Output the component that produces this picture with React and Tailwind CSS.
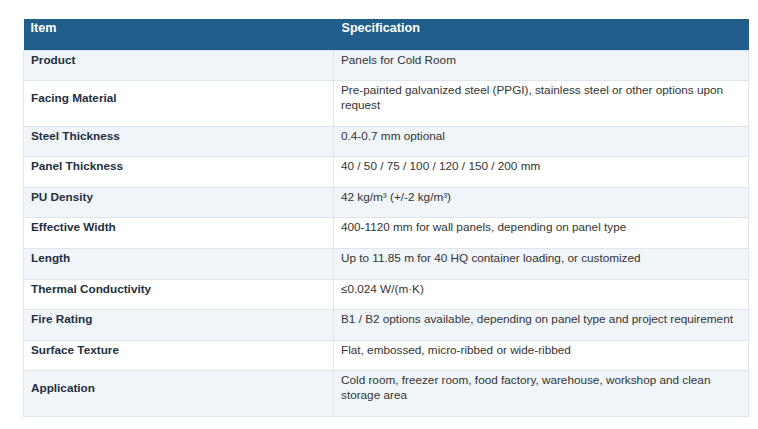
import React from 'react';

const rows = [
  { item: 'Product', spec: ['Panels for Cold Room'] },
  { item: 'Facing Material', spec: ['Pre-painted galvanized steel (PPGI), stainless steel or other options upon', 'request'] },
  { item: 'Steel Thickness', spec: ['0.4-0.7 mm optional'] },
  { item: 'Panel Thickness', spec: ['40 / 50 / 75 / 100 / 120 / 150 / 200 mm'] },
  { item: 'PU Density', spec: ['42 kg/m³ (+/-2 kg/m³)'] },
  { item: 'Effective Width', spec: ['400-1120 mm for wall panels, depending on panel type'] },
  { item: 'Length', spec: ['Up to 11.85 m for 40 HQ container loading, or customized'] },
  { item: 'Thermal Conductivity', spec: ['≤0.024 W/(m·K)'] },
  { item: 'Fire Rating', spec: ['B1 / B2 options available, depending on panel type and project requirement'] },
  { item: 'Surface Texture', spec: ['Flat, embossed, micro-ribbed or wide-ribbed'] },
  { item: 'Application', spec: ['Cold room, freezer room, food factory, warehouse, workshop and clean', 'storage area'] },
];

export default function App() {
  return (
    <div className="w-[758px] h-[429px] bg-white pt-[19px] pl-[23px]" style={{ fontFamily: '"Liberation Sans", Arial, sans-serif' }}>
      <table className="w-[726px] border-collapse text-[11.75px] leading-[15px]">
        <thead>
          <tr className="bg-[#215e8c] text-white text-[12.6px] font-bold">
            <th className="w-[310px] h-[31px] text-left align-top pl-[7px] pt-[2px]">Item</th>
            <th className="text-left align-top pl-[8px] pt-[2px]">Specification</th>
          </tr>
        </thead>
        <tbody>
          {rows.map((r, i) => (
            <tr key={r.item} className={i % 2 === 0 ? 'bg-[#f0f5fa]' : 'bg-white'}>
              <td className="border border-[#dde5ee] pl-[7px] pt-[1px] pb-[13.6px] align-middle font-bold text-[#1f2f3f]">
                {r.item}
              </td>
              <td className="border border-[#dde5ee] pl-[7px] pt-[1px] pb-[13.6px] align-top text-[#333]">
                {r.spec.map((s) => (
                  <div key={s}>{s}</div>
                ))}
              </td>
            </tr>
          ))}
        </tbody>
      </table>
    </div>
  );
}
